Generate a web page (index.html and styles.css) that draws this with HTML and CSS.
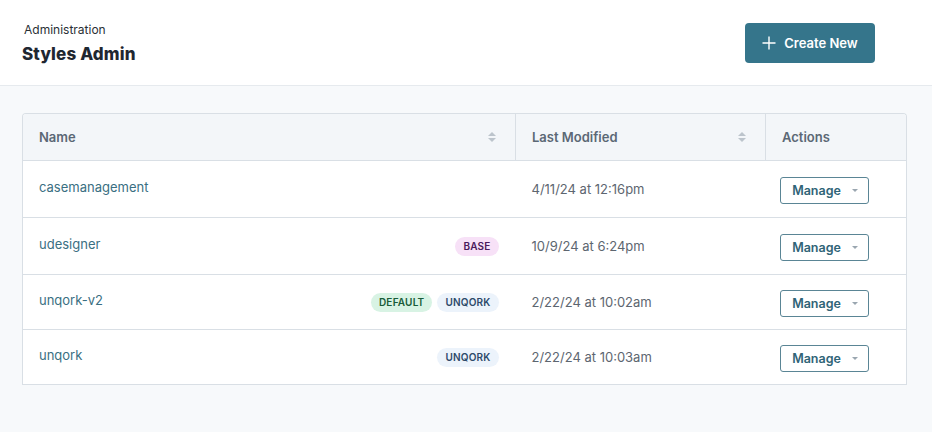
FILE: index.html
```html
<!DOCTYPE html>
<html lang="en">
<head>
  <meta charset="UTF-8" />
  <title>Styles Admin</title>
  <link rel="stylesheet" href="styles.css">
</head>
<body>
  <header class="page-header">
    <div class="titles">
      <div class="crumb">Administration</div>
      <h1>Styles Admin</h1>
    </div>
    <button type="button" class="create-btn">
      <svg width="14" height="14" viewBox="0 0 14 14" aria-hidden="true"><path d="M7 0.5v13M0.5 7h13" stroke="#fff" stroke-width="1.4" fill="none"/></svg>
      Create New
    </button>
  </header>

  <main class="content">
    <div class="table-wrap">
      <table class="styles-table">
        <thead>
          <tr>
            <th class="col-name"><div class="th-inner">Name <span class="sort"></span></div></th>
            <th class="col-date"><div class="th-inner">Last Modified <span class="sort"></span></div></th>
            <th class="col-actions">Actions</th>
          </tr>
        </thead>
        <tbody>
          <tr>
            <td><div class="name-cell"><a href="#">casemanagement</a></div></td>
            <td class="date">4/11/24 at 12:16pm</td>
            <td class="actions"><button type="button" class="manage">Manage <span class="caret"></span></button></td>
          </tr>
          <tr>
            <td><div class="name-cell"><a href="#">udesigner</a><span class="tags"><span class="tag tag-base">BASE</span></span></div></td>
            <td class="date">10/9/24 at 6:24pm</td>
            <td class="actions"><button type="button" class="manage">Manage <span class="caret"></span></button></td>
          </tr>
          <tr class="short">
            <td><div class="name-cell"><a href="#">unqork-v2</a><span class="tags"><span class="tag tag-default">DEFAULT</span><span class="tag tag-unqork">UNQORK</span></span></div></td>
            <td class="date">2/22/24 at 10:02am</td>
            <td class="actions"><button type="button" class="manage">Manage <span class="caret"></span></button></td>
          </tr>
          <tr class="short">
            <td><div class="name-cell"><a href="#">unqork</a><span class="tags"><span class="tag tag-unqork">UNQORK</span></span></div></td>
            <td class="date">2/22/24 at 10:03am</td>
            <td class="actions"><button type="button" class="manage">Manage <span class="caret"></span></button></td>
          </tr>
        </tbody>
      </table>
    </div>
  </main>
</body>
</html>
```

FILE: styles.css
```css
body {
  margin: 0;
  font-family: Inter, "Noto Sans", sans-serif;
  background: #f7f9fb;
  color: #222;
}
.page-header {
  background: #fff;
  border-bottom: 1px solid #e6eaee;
  height: 86px;
  box-sizing: border-box;
  display: flex;
  justify-content: space-between;
  align-items: flex-start;
  padding: 23px 57px 0 22px;
}
.crumb {
  font-size: 12px;
  color: #2a2f35;
  margin-left: 2px;
  line-height: 14px;
}
h1 {
  margin: 7px 0 0 0;
  font-size: 17px;
  font-weight: 800;
  color: #1f2731;
  letter-spacing: 0.15px;
  line-height: 20px;
}
.create-btn {
  width: 130px;
  height: 40px;
  background: #35758b;
  color: #fff;
  border: none;
  border-radius: 4px;
  font-family: inherit;
  font-size: 13px;
  font-weight: 600;
  display: flex;
  align-items: center;
  justify-content: center;
  gap: 8px;
  cursor: pointer;
}

.content {
  padding: 27px 25px 0 22px;
}
.table-wrap {
  background: #fff;
  border: 1px solid #d9dfe5;
  border-bottom: none;
  border-radius: 4px 4px 0 0;
  overflow: hidden;
}
.styles-table {
  width: 100%;
  border-collapse: collapse;
  font-size: 13px;
}
.styles-table th {
  background: #f3f6f9;
  height: 46px;
  text-align: left;
  font-weight: 600;
  color: #5b6875;
  padding: 0 16px;
  border-bottom: 1px solid #d9dfe5;
}
.styles-table th + th {
  border-left: 1px solid #d9dfe5;
}
.col-name { width: 460px; }
.col-date { width: 217px; }
.th-inner {
  display: flex;
  justify-content: space-between;
  align-items: center;
}
.sort {
  display: flex;
  flex-direction: column;
  gap: 2px;
  margin-right: 3px;
}
.sort::before,
.sort::after {
  content: "";
  border-left: 4px solid transparent;
  border-right: 4px solid transparent;
}
.sort::before {
  border-bottom: 4px solid #bcc4cc;
}
.sort::after {
  border-top: 4px solid #bcc4cc;
}
.styles-table td {
  padding: 0 16px;
  border-bottom: 1px solid #d9dfe5;
  height: 56px;
}
.styles-table tr.short td {
  height: 54px;
}
.styles-table td.actions {
  padding-left: 14px;
}
.name-cell {
  display: flex;
  justify-content: space-between;
  align-items: center;
  padding-right: 1px;
}
.name-cell a {
  color: #3a6f82;
  text-decoration: none;
  margin-top: -4px;
}
.tags {
  display: flex;
  gap: 5px;
}
.tag {
  font-size: 10px;
  font-weight: 600;
  height: 19px;
  line-height: 19px;
  padding: 0 8px;
  border-radius: 10px;
  letter-spacing: 0.2px;
}
.tag-base {
  background: #f7e1f7;
  color: #4a1a5c;
}
.tag-default {
  background: #d8f3e4;
  color: #195c38;
}
.tag-unqork {
  background: #ecf3fb;
  color: #2d4a6a;
}
.date {
  color: #5d6670;
}
.manage {
  width: 89px;
  height: 27px;
  border: 1px solid #5a8595;
  border-radius: 3px;
  background: #fff;
  color: #2f6477;
  font-family: inherit;
  font-size: 12.5px;
  font-weight: 600;
  display: flex;
  align-items: center;
  justify-content: center;
  gap: 11px;
  padding: 0 0 0 2px;
  margin-top: 2px;
  cursor: pointer;
}
.caret {
  border-left: 3px solid transparent;
  border-right: 3px solid transparent;
  border-top: 3px solid #9aa6b0;
  margin-top: 1px;
}
```
